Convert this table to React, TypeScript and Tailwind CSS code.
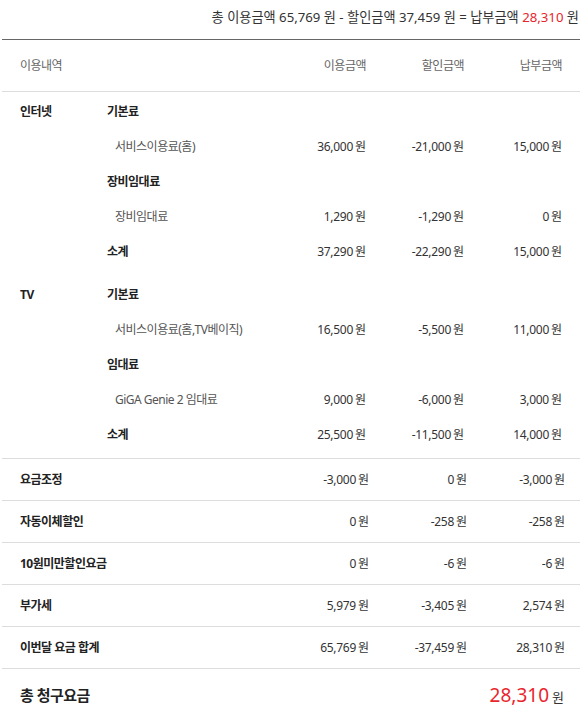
import React from 'react';

type Item =
  | { kind: 'head'; label: string }
  | { kind: 'item'; label: string; v: [string, string, string] }
  | { kind: 'sum'; v: [string, string, string] };

type Group = { name: string; items: Item[] };

const groups: Group[] = [
  {
    name: '인터넷',
    items: [
      { kind: 'head', label: '기본료' },
      { kind: 'item', label: '서비스이용료(홈)', v: ['36,000', '-21,000', '15,000'] },
      { kind: 'head', label: '장비임대료' },
      { kind: 'item', label: '장비임대료', v: ['1,290', '-1,290', '0'] },
      { kind: 'sum', v: ['37,290', '-22,290', '15,000'] },
    ],
  },
  {
    name: 'TV',
    items: [
      { kind: 'head', label: '기본료' },
      { kind: 'item', label: '서비스이용료(홈,TV베이직)', v: ['16,500', '-5,500', '11,000'] },
      { kind: 'head', label: '임대료' },
      { kind: 'item', label: 'GiGA Genie 2 임대료', v: ['9,000', '-6,000', '3,000'] },
      { kind: 'sum', v: ['25,500', '-11,500', '14,000'] },
    ],
  },
];

const extras: { label: string; v: [string, string, string] }[] = [
  { label: '요금조정', v: ['-3,000', '0', '-3,000'] },
  { label: '자동이체할인', v: ['0', '-258', '-258'] },
  { label: '10원미만할인요금', v: ['0', '-6', '-6'] },
  { label: '부가세', v: ['5,979', '-3,405', '2,574'] },
  { label: '이번달 요금 합계', v: ['65,769', '-37,459', '28,310'] },
];

const Amount = ({ value }: { value: string }) => (
  <div className="w-[98px] shrink-0 text-right text-[12px] text-[#333]">
    <span className="tracking-[-0.3px]">{value}</span>
    <span className="ml-[2px]">원</span>
  </div>
);

const Amounts = ({ v }: { v: [string, string, string] }) => (
  <>
    {v.map((x, i) => (
      <Amount key={i} value={x} />
    ))}
  </>
);

export default function App() {
  return (
    <div
      className="w-[583px] bg-white text-[#222]"
      style={{ fontFamily: '"Noto Sans", "Noto Sans CJK KR", sans-serif' }}
    >
      <div className="h-[39px] pt-[8px] pr-[4px] text-right text-[13.2px] leading-[18px] text-[#333]">
        총 이용금액 65,769 원 - 할인금액 37,459 원 = 납부금액{' '}
        <span className="text-[#e8262d]">28,310</span> 원
      </div>

      <div className="ml-[2px] w-[578px] border-t border-[#666]">
        <div className="flex h-[52px] items-center border-b border-[#ddd] pl-[18px] pr-[18px] text-[12px] tracking-[-0.5px] text-[#666]">
          <div className="flex-1">이용내역</div>
          <div className="w-[98px] text-right">이용금액</div>
          <div className="w-[98px] text-right">할인금액</div>
          <div className="w-[98px] text-right">납부금액</div>
        </div>

        {groups.map((g) => (
          <div key={g.name} className="flex pt-[2px] pb-[6px] pl-[18px] pr-[18px]">
            <div className="flex h-[35px] w-[87px] shrink-0 items-center text-[12px] font-bold tracking-[-0.5px]">
              {g.name}
            </div>
            <div className="flex-1">
              {g.items.map((it, i) => (
                <div key={i} className="flex h-[35px] items-center">
                  {it.kind === 'head' && (
                    <div className="flex-1 text-[12px] font-bold tracking-[-0.5px]">{it.label}</div>
                  )}
                  {it.kind === 'item' && (
                    <>
                      <div className="flex-1 pl-[8px] text-[12px] tracking-[-0.5px] text-[#555]">
                        {it.label}
                      </div>
                      <Amounts v={it.v} />
                    </>
                  )}
                  {it.kind === 'sum' && (
                    <>
                      <div className="flex-1 text-[12px] font-bold tracking-[-0.5px]">소계</div>
                      <Amounts v={it.v} />
                    </>
                  )}
                </div>
              ))}
            </div>
          </div>
        ))}

        {extras.map((r) => (
          <div
            key={r.label}
            className="flex h-[42px] items-center border-t border-[#ddd] pl-[18px] pr-[15px]"
          >
            <div className="flex-1 text-[12px] font-bold tracking-[-0.5px]">{r.label}</div>
            <Amounts v={r.v} />
          </div>
        ))}

        <div className="flex h-[53px] items-center border-t border-[#ddd] pl-[18px] pr-[16px]">
          <div className="flex-1 text-[15px] font-bold tracking-[-0.5px]">총 청구요금</div>
          <div className="flex items-baseline">
            <span className="text-[19px] text-[#e8262d]">28,310</span>
            <span className="ml-[3px] text-[13px] text-[#333]">원</span>
          </div>
        </div>
      </div>
    </div>
  );
}
